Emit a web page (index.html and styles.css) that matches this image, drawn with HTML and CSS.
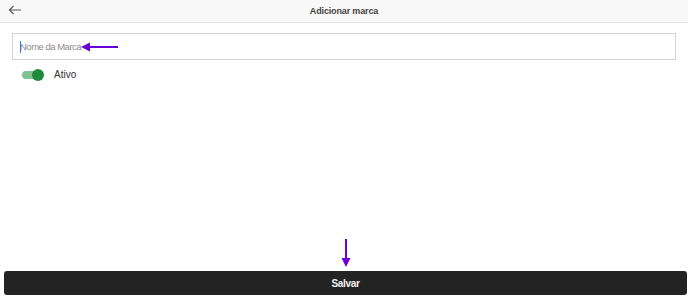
FILE: index.html
```html
<!DOCTYPE html>
<html lang="pt">
<head>
  <meta charset="utf-8" />
  <title>Adicionar marca</title>
  <link rel="stylesheet" href="styles.css">
</head>
<body>
  <div class="screen">
    <!-- top bar -->
    <header class="topbar">
      <button class="back" aria-label="Voltar">
        <svg width="14" height="10" viewBox="0 0 14 10"><path d="M13 5H1.5M5.5 1L1.5 5l4 4" fill="none" stroke="#555" stroke-width="1.1"/></svg>
      </button>
      <h1>Adicionar marca</h1>
    </header>

    <!-- form -->
    <main class="form">
      <div class="field">
        <span class="caret"></span>
        <input type="text" placeholder="Nome da Marca" />
        <svg class="mark mark-left" width="38" height="10" viewBox="0 0 38 10"><path d="M0 5l9-4.5v9z" fill="#6a00d6"/><path d="M8 5h29" stroke="#6a00d6" stroke-width="2"/></svg>
      </div>
      <label class="toggle-row">
        <span class="switch"><span class="knob"></span></span>
        <span>Ativo</span>
      </label>
    </main>

    <footer class="actions">
      <svg class="mark mark-down" width="10" height="29" viewBox="0 0 10 29"><path d="M5 0v20" stroke="#6a00d6" stroke-width="2"/><path d="M0.5 19h9L5 28z" fill="#6a00d6"/></svg>
      <button class="save">Salvar</button>
    </footer>
  </div>
</body>
</html>
```

FILE: styles.css
```css
*,*::before,*::after{box-sizing:border-box;margin:0;padding:0;}

body{
  font-family:"Liberation Sans",Arial,sans-serif;
  background:#fff;
  color:#333;
}

.screen{
  display:flex;
  flex-direction:column;
  height:298px;
}

/* top bar */
.topbar{
  position:relative;
  height:23px;
  background:#f8f8f8;
  border-bottom:1px solid #e6e6e6;
  display:flex;
  align-items:center;
  justify-content:center;
}
.topbar h1{
  font-size:9px;
  font-weight:bold;
  color:#444;
  letter-spacing:-.15px;
}
.back{
  position:absolute;
  left:8px;
  top:5px;
  border:0;
  background:none;
  display:flex;
}

/* form */
.form{
  flex:1;
  padding:10px 12px 0;
}
.field{
  position:relative;
  height:27px;
  border:1px solid #d2d2d2;
  display:flex;
  align-items:center;
}
.field input{
  border:0;
  outline:0;
  width:100%;
  height:100%;
  padding-left:7px;
  font:9.5px "Liberation Sans",Arial,sans-serif;
  letter-spacing:-.5px;
  color:#333;
  background:transparent;
}
.field input::placeholder{color:#8c8c8c;}
.caret{
  position:absolute;
  left:7px;
  top:7px;
  width:1px;
  height:12px;
  background:#3a7bd5;
}

.mark{position:absolute;}
.mark-left{left:68px;top:8px;}

.toggle-row{
  display:flex;
  align-items:center;
  gap:12px;
  margin:9px 0 0 10px;
  font-size:10px;
  color:#333;
}
.switch{
  position:relative;
  width:20px;
  height:8px;
  border-radius:4px;
  background:#80c191;
}
.knob{
  position:absolute;
  right:-2px;
  top:-2px;
  width:12px;
  height:12px;
  border-radius:50%;
  background:#1f8c3b;
}

/* bottom action */
.actions{
  position:relative;
  padding:0 1px 3px 4px;
}
.mark-down{left:341px;top:-32px;}
.save{
  width:100%;
  height:24px;
  border:0;
  border-radius:3px;
  background:#232323;
  color:#f2f2f2;
  font:bold 10px "Liberation Sans",Arial,sans-serif;
  letter-spacing:-.3px;
}
```
